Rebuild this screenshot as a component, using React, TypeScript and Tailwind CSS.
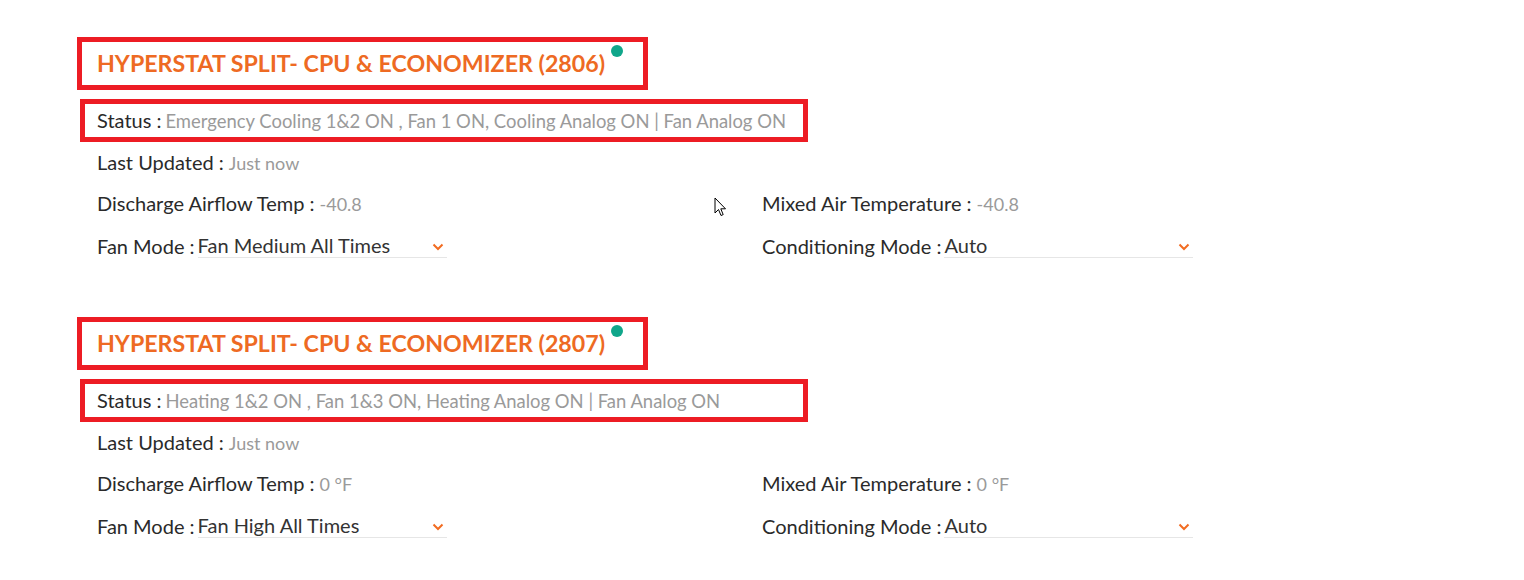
import React from 'react'

interface CardProps {
  id: string
  status: string
  discharge: string
  mixedAir: string
  fanMode: string
  conditioning: string
}

const cards: CardProps[] = [
  {
    id: '2806',
    status: 'Emergency Cooling 1&2 ON , Fan 1 ON, Cooling Analog ON | Fan Analog ON',
    discharge: '-40.8',
    mixedAir: '-40.8',
    fanMode: 'Fan Medium All Times',
    conditioning: 'Auto',
  },
  {
    id: '2807',
    status: 'Heating 1&2 ON , Fan 1&3 ON, Heating Analog ON | Fan Analog ON',
    discharge: '0 °F',
    mixedAir: '0 °F',
    fanMode: 'Fan High All Times',
    conditioning: 'Auto',
  },
]

function Chevron() {
  return (
    <svg width="12" height="8" viewBox="0 0 12 8" className="mt-[3px]">
      <polyline points="1.5,1.5 6,6 10.5,1.5" fill="none" stroke="#f26c22" strokeWidth="2" />
    </svg>
  )
}

function SelectField({ value }: { value: string }) {
  return (
    <div className="flex items-center justify-between w-[249px] h-[24px] border-b border-[#e6e6e6] pr-[3px]">
      <span className="text-[#333333] text-[20px]">{value}</span>
      <Chevron />
    </div>
  )
}

// label and value on one baseline
function Field({ label, value, status }: { label: string; value: string; status?: boolean }) {
  return (
    <p className="leading-none">
      <span className="text-[#2a2a2a] text-[20px]">{label}</span>
      <span className={status ? 'text-[#9a9a9a] text-[18.45px] ml-[4px]' : 'text-[#9a9a9a] text-[18px] ml-[5px]'}>
        {value}
      </span>
    </p>
  )
}

function Card({ id, status, discharge, mixedAir, fanMode, conditioning }: CardProps) {
  return (
    <div className="flex flex-col">
      {/* title */}
      <div className="flex items-center w-[571px] h-[53px] ml-[77px] pl-[15px] border-[5px] border-[#ed1c24]">
        <h2 className="text-[23.2px] font-bold text-[#ee6a23]">
          HYPERSTAT SPLIT- CPU &amp; ECONOMIZER ({id})
        </h2>
        <span className="w-[12px] h-[12px] rounded-full bg-[#10a68a] ml-[6px] -mt-[26px]" />
      </div>

      {/* status */}
      <div className="flex items-center w-[728px] h-[43px] mt-[9px] ml-[80px] pl-[12px] border-[5px] border-[#ed1c24]">
        <Field label="Status :" value={status} status />
      </div>

      <div className="flex items-center h-[40px] ml-[97px]">
        <Field label="Last Updated :" value="Just now" />
      </div>

      <div className="grid grid-cols-[665px_1fr] ml-[97px]">
        <div className="flex items-center h-[42px]">
          <Field label="Discharge Airflow Temp :" value={discharge} />
        </div>
        <div className="flex items-center h-[42px]">
          <Field label="Mixed Air Temperature :" value={mixedAir} />
        </div>
        <div className="flex items-center h-[43px] gap-[3px]">
          <span className="text-[#2a2a2a] text-[20px]">Fan Mode :</span>
          <SelectField value={fanMode} />
        </div>
        <div className="flex items-center h-[43px] gap-[3px]">
          <span className="text-[#2a2a2a] text-[20px]">Conditioning Mode :</span>
          <SelectField value={conditioning} />
        </div>
      </div>
    </div>
  )
}

export default function App() {
  return (
    <div
      className="relative w-[1524px] h-[580px] bg-white overflow-hidden pt-[37px] leading-none flex flex-col gap-[50px]"
      style={{ fontFamily: 'Lato, "Open Sans", sans-serif' }}
    >
      {cards.map(card => (
        <Card key={card.id} {...card} />
      ))}

      {/* mouse pointer */}
      <svg width="14" height="22" viewBox="0 0 14 22" className="absolute left-[714px] top-[197px]">
        <path
          d="M1 1 L1 16 L4.5 12.5 L7 18.5 L9.2 17.6 L6.8 11.8 L11.5 11.8 Z"
          fill="#ffffff"
          stroke="#000000"
          strokeWidth="1"
          strokeLinejoin="round"
        />
      </svg>
    </div>
  )
}
